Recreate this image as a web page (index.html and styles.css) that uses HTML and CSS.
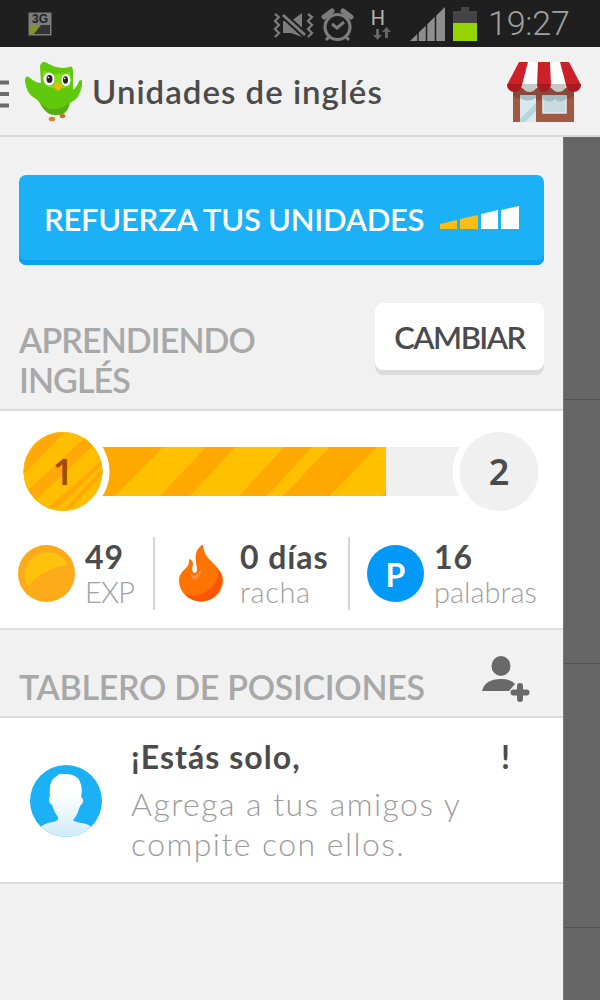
FILE: index.html
```
<!DOCTYPE html>
<html lang="es">
<head>
    <meta charset="UTF-8">
    <meta name="viewport" content="width=device-width, initial-scale=1.0">
    <title>Unidades de inglés</title>
    <link rel="stylesheet" href="styles.css">
</head>
<body>
    <div class="status-bar">
        <svg class="status-3g" width="24" height="24" viewBox="0 0 24 24">
            <rect x="0.5" y="0.5" width="23" height="23" fill="#7d7d7d"/>
            <rect x="2" y="13" width="20" height="9" fill="#333"/>
            <path d="M2 13h11l-7 9H2z" fill="#7c962c"/>
            <text x="12" y="11" text-anchor="middle" class="label-3g">3G</text>
        </svg>
        <svg class="status-icons" width="210" height="38" viewBox="272 4 210 38">
            <!-- vibrar / silencio -->
            <g fill="none" stroke="#7c7c7c" stroke-width="2.2">
                <path d="M275 13l4 3-4 4 4 4-4 4 4 4-4 4"/>
                <path d="M308 13l4 3-4 4 4 4-4 4 4 4-4 4"/>
            </g>
            <path d="M283 20h8l11-8v24l-11-4h-8z" fill="#7c7c7c"/>
            <path d="M281 12l25 23" stroke="#1f1f1f" stroke-width="7"/>
            <path d="M283 14l22 20" stroke="#7c7c7c" stroke-width="3"/>
            <!-- alarma -->
            <circle cx="337.500" cy="26" r="12.500" fill="none" stroke="#7c7c7c" stroke-width="3.200"/>
            <path d="M332 23l5 4 7-6" fill="none" stroke="#7c7c7c" stroke-width="3"/>
            <path d="M324 16l8-6M351 16l-8-6" stroke="#7c7c7c" stroke-width="5" stroke-linecap="round"/>
            <path d="M329 36l-3 3M346 36l3 3" stroke="#7c7c7c" stroke-width="3"/>
            <!-- datos -->
            <text x="378" y="24" text-anchor="middle" class="label-h">H</text>
            <path d="M376 28h3v6h3l-4.500 5-4.500-5h3zM385 37h3v-6h3l-4.500-5-4.500 5h3z" fill="#666"/>
            <path d="M410 40l35-34v34z" fill="#8e8e8e"/>
            <path d="M435.500 12v28M426.500 20v20M418 28v12" stroke="#1f1f1f" stroke-width="1.500"/>
            <path d="M453 22v-12h8V6h8v4h8v12z" fill="#444"/>
            <path d="M453 22h24v18h-24z" fill="#94d500"/>
        </svg>
        <span class="clock">19:27</span>
    </div>

    <div class="app-bar">
        <svg class="menu-icon" width="9" height="28" viewBox="0 0 9 28">
            <path d="M0 2.500h9M0 14h9M0 25.500h9" stroke="#6b6b6b" stroke-width="4"/>
        </svg>
        <svg class="owl" width="60" height="62" viewBox="0 0 60 62">
            <path d="M16 5Q18 -1 23 2Q35 9 45 6Q49 4 49 11L49 29Q53 26 55 20Q59 17 58 24Q56 38 46 42Q44 54 33 54Q23 55 17 44Q14 39 12 38Q2 33 1 20Q1 13 6 17Q12 22 17 22Z" fill="#62c80c"/>
            <path d="M16 42Q29 54 45 42Q43 54 33 54Q22 55 16 42Z" fill="#55ad10"/>
            <path d="M20 9Q25 14 34 13Q41 13 46 11L46 25Q34 31 21 24Q17 16 20 9Z" fill="#80dc18"/>
            <ellipse cx="25" cy="18" rx="5.500" ry="6.500" fill="#fff"/>
            <ellipse cx="42" cy="19" rx="4.500" ry="6" fill="#fff"/>
            <ellipse cx="25.500" cy="18" rx="3" ry="4" fill="#28202b"/>
            <ellipse cx="41.500" cy="19" rx="2.500" ry="3.800" fill="#28202b"/>
            <circle cx="24.500" cy="16.500" r="0.800" fill="#fff"/>
            <circle cx="40.700" cy="17.500" r="0.800" fill="#fff"/>
            <path d="M30 23Q34 19 38 24Q38 29 34 30Q30 28 30 23Z" fill="#f6b315"/>
            <ellipse cx="28" cy="58" rx="3.300" ry="2.300" fill="#d98432"/>
            <ellipse cx="38.500" cy="55" rx="2.800" ry="2.200" fill="#b77731"/>
        </svg>
        <h1 class="app-title">Unidades de inglés</h1>
        <svg class="shop" width="74" height="62" viewBox="0 0 74 62">
            <path d="M6 26h61v34H6z" fill="#a05a42"/>
            <path d="M6 27h61v7q-8 6-15 2q-8 5-15 0q-8 5-16 0q-7 4-15-2z" fill="#86493a"/>
            <path d="M13 33h16v27H13z" fill="#d7e9ee"/>
            <path d="M13 33h16v3q-8 5-16 0z" fill="#a9bfc5"/>
            <path d="M13 57L29 41v8L18 60h-5z" fill="#b5d6df"/>
            <path d="M36 34h23v17H36z" fill="#c8dbe1" stroke="#e2e9ec" stroke-width="1.500"/>
            <path d="M36 33h23v4q-6 5-11 0q-6 5-12 0z" fill="#a7bbc2"/>
            <path d="M12 0h50l12 23H0z" fill="#fff"/>
            <path d="M15 22h15v1a7.500 7 0 0 1-15 0zM44 22h15v1a7.500 7 0 0 1-15 0z" fill="#c8c8c8"/>
            <path d="M12 0h9L15 23H0zM31 0h12l1 23H30zM53 0h9l12 23H59z" fill="#cc2128"/>
            <path d="M0 22h15v1a7.500 7 0 0 1-15 0zM30 22h14v1a7 7 0 0 1-14 0zM59 22h15v1a7.500 7 0 0 1-15 0z" fill="#a91b20"/>
        </svg>
    </div>

    <div class="content">
        <div class="drawer">
            <button class="strengthen">
                <span class="strengthen-text">REFUERZA TUS UNIDADES</span>
                <svg width="79" height="24" viewBox="0 0 79 24">
                    <path d="M0 17l17-4v9H0zM20 12l18-4v14H20z" fill="#fdbd12"/>
                    <path d="M41 7l17-4v19H41zM61 3l18-4v23H61z" fill="#fff"/>
                </svg>
            </button>

            <div class="section-head learning">
                <h2 class="section-title">APRENDIENDO<br>INGLÉS</h2>
                <button class="change">CAMBIAR</button>
            </div>

            <div class="card progress-card">
                <svg class="progress" width="516" height="79" viewBox="24 432 516 79">
                    <defs>
                        <clipPath id="barra"><path d="M100 447h286v49H100z"/></clipPath>
                        <clipPath id="nivel"><circle cx="63" cy="471.500" r="39.500"/></clipPath>
                    </defs>
                    <path d="M100 447h380v49H100z" fill="#f0f0f0"/>
                    <g clip-path="url(#barra)">
                        <path d="M100 447h290v49H100z" fill="#ffa800"/>
                        <path d="M163 447h43l-46 49h-45zM235 447h49l-45 49h-49zM312 447h18l-47 49h-16zM377 447h9v45l-4 4h-52z" fill="#ffc000"/>
                    </g>
                    <circle cx="63" cy="471.500" r="46.500" fill="#fff"/>
                    <circle cx="499" cy="471.500" r="46.500" fill="#fff"/>
                    <g clip-path="url(#nivel)">
                        <path d="M20 430h90v90H20z" fill="#ffbf00"/>
                        <path d="M20 430h47L20 478zM86 437l10 6-60 57-9-9zM104 458v5L58 508l-9-1zM104 467v6l-32 34-8 3z" fill="#ffa908"/>
                    </g>
                    <circle cx="63" cy="471.500" r="39" fill="none" stroke="#ffb70a"/>
                    <circle cx="499" cy="471.500" r="39.500" fill="#f0f0f0"/>
                    <text x="63" y="485" class="level level-now">1</text>
                    <text x="499" y="485" class="level level-next">2</text>
                </svg>

                <div class="stats">
                    <div class="stat stat-exp">
                        <svg width="57" height="57" viewBox="0 0 57 57">
                            <circle cx="28.500" cy="28.500" r="28.500" fill="#fbaa19"/>
                            <path d="M10 42A23 23 0 0 1 46 14L49 20Q21 25 10 42Z" fill="#ffc20c"/>
                        </svg>
                        <div><div class="value">49</div><div class="unit unit-exp">EXP</div></div>
                    </div>
                    <div class="stat stat-streak">
                        <svg width="44" height="57" viewBox="0 0 44 57">
                            <path d="M23 0C15 6 16 12 18 24Q18 28 15 28Q12 27 14 19Q14 15 10 14Q11 20 5 25Q0 29 0 36A22 21 0 0 0 44 35Q44 27 33 17Q24 9 24 0Z" fill="#ff7300"/>
                            <path d="M40 25Q47 38 37 50Q22 63 6 50Q20 53 31 44Q39 37 40 25Z" fill="#fa5600"/>
                            <path d="M11 28Q16 34 22 25Q22 34 14 34Z" fill="#ff934a"/>
                        </svg>
                        <div><div class="value">0 días</div><div class="unit unit-streak">racha</div></div>
                    </div>
                    <div class="stat stat-words">
                        <div class="word-badge">P</div>
                        <div><div class="value">16</div><div class="unit">palabras</div></div>
                    </div>
                </div>
            </div>

            <div class="section-head board">
                <h2 class="section-title">TABLERO DE POSICIONES</h2>
                <svg width="48" height="46" viewBox="0 0 48 46">
                    <ellipse cx="19" cy="10" rx="9.500" ry="10" fill="#696969"/>
                    <path d="M0 35Q3 23 19 23Q29 23 33 28l-6 7z" fill="#696969"/>
                    <path d="M38 30v13M31.500 36.500h13" stroke="#696969" stroke-width="6" stroke-linecap="round"/>
                </svg>
            </div>

            <div class="card friends">
                <svg class="avatar" width="72" height="72" viewBox="0 0 72 72">
                    <defs>
                        <linearGradient id="silueta" x1="0" y1="0" x2="0" y2="1">
                            <stop offset="0.300" stop-color="#fff"/>
                            <stop offset="1" stop-color="#cdeafa"/>
                        </linearGradient>
                        <clipPath id="redondo"><circle cx="36" cy="36" r="36"/></clipPath>
                    </defs>
                    <circle cx="36" cy="36" r="36" fill="#1cb0f6"/>
                    <path clip-path="url(#redondo)" d="M20 31Q18 15 27 11Q29 8 33 9Q47 8 50 17Q53 23 51 32Q55 34 52 39Q50 40 49 44Q47 51 43 55Q45 57 52 58Q59 59 64 64V74H8V64Q14 58 23 57Q29 56 28 52Q24 47 22 40Q17 37 20 31Z" fill="url(#silueta)"/>
                </svg>
                <div class="message">
                    <div class="message-title"><span>¡Estás solo,</span><span>!</span></div>
                    <p class="message-text">Agrega a tus amigos y<br>compite con ellos.</p>
                </div>
            </div>
        </div>
        <div class="dimmed">
            <div class="dim-row first"></div>
            <div class="dim-row"></div>
            <div class="dim-row"></div>
        </div>
    </div>
</body>
</html>
```
FILE: styles.css
```
* { box-sizing: border-box; }
body { margin: 0; width: 600px; height: 1000px; overflow: hidden; display: flex; flex-direction: column; background: #f1f1f1; font-family: Lato, "Open Sans", sans-serif; color: #4b4b4b; }
svg { display: block; flex: none; overflow: visible; }
h1, h2, p { margin: 0; }
button { border: 0; padding: 0; font-family: inherit; }

/* barra de estado */
.status-bar { height: 47px; flex: none; display: flex; align-items: center; background: #1f1f1f; padding: 0 30px 0 28px; }
.label-3g { font: bold 12px "Liberation Sans", sans-serif; fill: #222; }
.label-h { font: 20px Roboto, sans-serif; fill: #b5b5b5; }
.status-icons { margin-left: 220px; }
.clock { margin-left: 6px; margin-top: -2px; font: 300 34px Roboto, sans-serif; color: #a0a0a0; letter-spacing: -0.2px; white-space: nowrap; }

/* encabezado */
.app-bar { height: 90px; flex: none; display: flex; align-items: center; padding-right: 19px; border-bottom: 2px solid #d9d9d9; }
.menu-icon { margin-top: 5px; }
.owl { margin: 2px 0 0 15px; }
.shop { margin-top: 3px; }
.app-title { margin-left: 8px; flex: 1; font-size: 33px; font-weight: 600; line-height: 40px; letter-spacing: 1px; white-space: nowrap; }

.content { flex: 1; display: flex; }
.drawer { width: 563px; flex: none; }
.dimmed { flex: 1; background: #666; border-left: 1px solid #777; }
.dim-row { height: 264px; border-bottom: 1px solid #505050; }
.dim-row.first { height: 263px; }

.strengthen { display: flex; align-items: center; gap: 14px; width: 525px; height: 90px; margin: 38px 0 0 19px; padding: 0 25px 3px; border-radius: 7px; background: #1cb0f6; box-shadow: inset 0 -5px #0aa2ec; color: #fff; }
.strengthen-text { width: 382px; text-align: left; font-size: 31px; font-weight: 600; letter-spacing: -0.25px; white-space: nowrap; }

.section-head { display: flex; justify-content: space-between; padding: 0 19px; border-bottom: 2px solid #dcdcdc; }
.section-title { font-size: 34px; font-weight: 600; line-height: 40px; letter-spacing: -0.3px; color: #a8a8a8; white-space: nowrap; }
.learning { height: 146px; padding-top: 38px; }
.learning .section-title { margin-top: 17px; letter-spacing: -0.9px; }
.change { width: 169px; height: 72px; padding-bottom: 4px; border-radius: 8px; background: #fff; box-shadow: inset 0 -5px #dcdcdc; color: #4b4b4b; font-size: 31px; font-weight: 600; letter-spacing: -1.5px; }

.card { background: #fff; border-bottom: 2px solid #dcdcdc; }
.progress-card { height: 219px; padding: 21px 0 0 24px; }
.level { font-family: "Noto Sans", sans-serif; font-size: 36px; font-weight: 600; text-anchor: middle; }
.level-now { fill: #a24a08; }
.level-next { fill: #4b4b4b; }

.stats { display: flex; margin: 26px 0 0 -6px; }
.stat { display: flex; align-items: center; height: 73px; }
.stat + .stat { border-left: 2px solid #d5d5d5; }
.stat-exp { width: 135px; gap: 10px; }
.stat-streak { width: 195px; padding-left: 24px; gap: 17px; }
.stat-words { padding-left: 17px; gap: 10px; }
.value { margin-top: 1px; font-size: 32px; font-weight: 700; line-height: 36px; letter-spacing: 0.9px; white-space: nowrap; }
.unit { margin-top: -1px; font-size: 29px; font-weight: 300; line-height: 35px; color: #a0a0a0; white-space: nowrap; }
.unit-exp { letter-spacing: -0.8px; }
.unit-streak { letter-spacing: 0.6px; }
.word-badge { width: 57px; height: 57px; border-radius: 50%; background: #0099f7; color: #fff; font: 700 32px/59px Lato, sans-serif; text-align: center; }

.board { height: 88px; padding: 26px 33px 0 19px; }
.board .section-title { margin-top: 11px; }

.friends { display: flex; height: 166px; padding-left: 30px; }
.avatar { margin-top: 47px; }
.message { margin-left: 29px; padding-top: 19px; }
.message-title { display: flex; justify-content: space-between; width: 380px; font-size: 32px; font-weight: 700; line-height: 40px; letter-spacing: 1.05px; }
.message-text { margin-top: 7px; font-size: 32px; font-weight: 300; line-height: 40px; letter-spacing: 1.45px; color: #9c9c9c; white-space: nowrap; }
```
